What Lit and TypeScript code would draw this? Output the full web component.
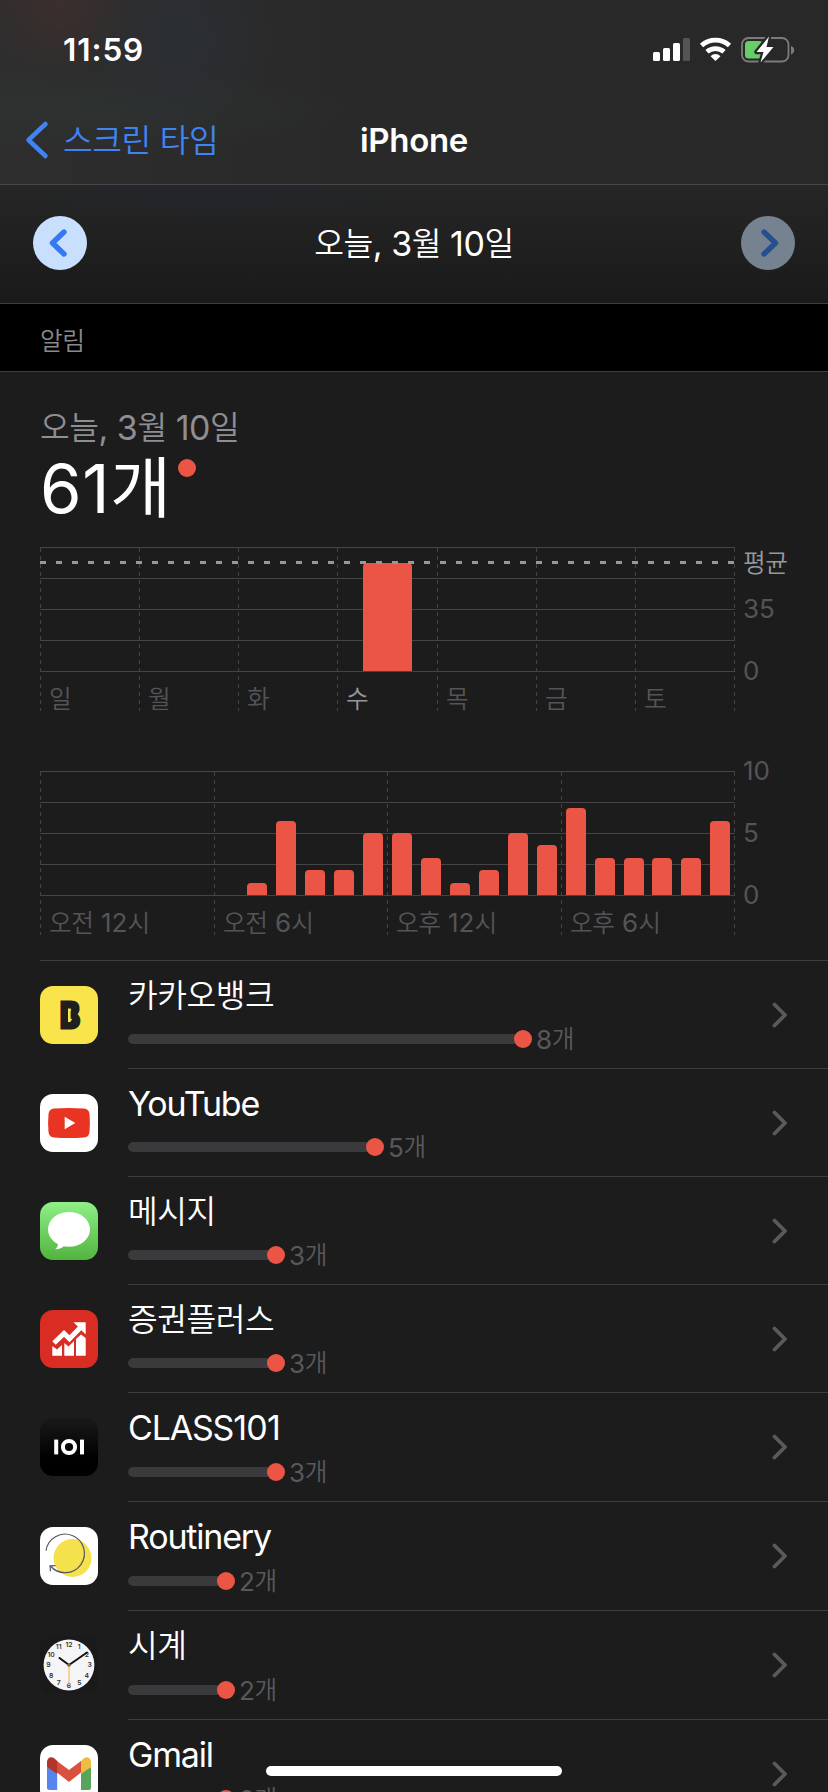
import { LitElement, html, svg, css } from 'lit';
import { customElement, property } from 'lit/decorators.js';

const RUNS = /([\uac00-\ud7a3]+|[\d,\s]+)/;

const runClass = (part: string) => {
	if (/[\uac00-\ud7a3]/.test(part)) return 'ko';
	return /[a-z]/i.test(part) ? 'la' : 'num';
};

// Hangul, latin and digit runs are spaced differently, so each run gets its own span
const mixed = (text: string) =>
	text
		.split(RUNS)
		.filter((part) => part)
		.map((part) => html`<span class=${runClass(part)}>${part}</span>`);

const mixedSvg = (text: string) =>
	text
		.split(RUNS)
		.filter((part) => part)
		.map((part) => svg`<tspan class=${runClass(part)}>${part}</tspan>`);

const CLOCK_NUMBERS = [1, 2, 3, 4, 5, 6, 7, 8, 9, 10, 11, 12];

const ICONS: Record<string, unknown> = {
	kakao: svg`
		<rect width="58" height="58" rx="13" fill="#fae44c" />
		<text x="20.2" y="42.2" font-family="Inter" font-weight="900" font-size="36" textLength="19.5" lengthAdjust="spacingAndGlyphs" fill="#1f1f1d" stroke="#1f1f1d" stroke-width="3">B</text>
		<rect x="28" y="22.5" width="2.6" height="13.5" fill="#fae44c" />`,
	youtube: svg`
		<rect width="58" height="58" rx="13" fill="#fff" />
		<path d="M14 14.5Q29 13.3 44 14.5Q49 15 49.5 20Q50.3 29 49.5 38Q49 43 44 43.5Q29 44.7 14 43.5Q9 43 8.5 38Q7.7 29 8.5 20Q9 15 14 14.5Z" fill="#e93323" />
		<path d="M24.7 22.7L35.3 29L24.7 35.2Z" fill="#fff" />`,
	messages: svg`
		<defs>
			<linearGradient id="green" x1="0" y1="0" x2="0" y2="1">
				<stop offset="0" stop-color="#8ef087" />
				<stop offset="1" stop-color="#52b33f" />
			</linearGradient>
		</defs>
		<rect width="58" height="58" rx="13" fill="url(#green)" />
		<ellipse cx="29" cy="27.4" rx="21" ry="17.4" fill="#fff" />
		<path d="M18 40Q18.5 45 15 47.3Q21 47.5 25 43Z" fill="#fff" />`,
	stocks: svg`
		<rect width="58" height="58" rx="13" fill="#d92d23" />
		<path d="M14 33L24 23.5L29.5 28.8L41 17" fill="none" stroke="#fff" stroke-width="5" />
		<path d="M33.5 12.3H45.7V24.5Z" fill="#fff" />
		<path d="M12.3 36L17 39.5L22 35V45.7H12.3ZM24.3 33L28.5 36.5L34 31V45.7H24.3ZM36 29L41 24.5L45.7 28V45.7H36Z" fill="#fff" />`,
	class101: svg`
		<defs>
			<linearGradient id="black" x1="0" y1="0" x2="0" y2="1">
				<stop offset="0" stop-color="#191919" />
				<stop offset="0.7" stop-color="#000" />
			</linearGradient>
		</defs>
		<rect width="58" height="58" rx="13" fill="url(#black)" />
		<rect x="14.2" y="21.6" width="4" height="14.8" fill="#fff" />
		<circle cx="29" cy="29" r="6.1" fill="none" stroke="#fff" stroke-width="4" />
		<rect x="40" y="21.6" width="4" height="14.8" fill="#fff" />`,
	routinery: svg`
		<rect width="58" height="58" rx="13" fill="#fff" />
		<circle cx="32.5" cy="31" r="19" fill="#f4e14b" />
		<path d="M6 23.7A19.3 19.3 0 1 1 10.5 39M10.5 44.3L10 38.8L15.5 38.6" fill="none" stroke="#55556a" stroke-width="1.2" />`,
	clock: svg`
		<rect width="58" height="58" rx="13" fill="#1a1a1a" />
		<circle cx="29" cy="29" r="25.4" fill="#f5f5f7" />
		${CLOCK_NUMBERS.map((n) => {
			const angle = (n * Math.PI) / 6;
			return svg`<text x=${29 + 20.6 * Math.sin(angle)} y=${31.3 - 20.6 * Math.cos(angle)} text-anchor="middle" font-family="Inter" font-weight="600" font-size="6.8" fill="#333">${n}</text>`;
		})}
		<path d="M29 29L19.5 22M29 29L47 16.5" stroke="#111" stroke-width="2" stroke-linecap="round" />
		<path d="M29 29V49" stroke="#f2bb6a" stroke-width="1.2" />
		<circle cx="29" cy="29" r="1.8" fill="#8a6330" />`,
	gmail: svg`
		<rect width="58" height="58" rx="13" fill="#fff" />
		<path d="M7 22L17.2 27V45H9.5Q7 45 7 42.5Z" fill="#5686ec" />
		<path d="M51 22L41 27V45H48.5Q51 45 51 42.5Z" fill="#57a55a" />
		<path d="M17 16L29 25L41 16V27.5L29 37L17 27.5Z" fill="#d9503f" />
		<path d="M17.2 16L14.5 13.5C11 10.5 7 13 7 17V22L17.2 29Z" fill="#b3342b" />
		<path d="M41 16L43.5 13.5C47 10.5 51 13 51 17V22L41 29Z" fill="#ecbd41" />`,
};

const shared = css`
	.la,
	.num {
		font-family: Inter, sans-serif;
		font-weight: 400;
	}

	.la {
		letter-spacing: -0.035em;
	}

	.num {
		letter-spacing: -0.014em;
	}

	.ko {
		font-family: 'Noto Sans CJK KR', sans-serif;
		font-weight: 350;
		font-size: 0.95em;
		letter-spacing: -0.015em;
		line-height: 1;
		vertical-align: 0.04em;
	}
`;

@customElement('st-app-row')
export class StAppRow extends LitElement {
	@property() name = '';
	@property() icon = '';
	@property({ type: Number }) count = 0;
	@property({ type: Number }) track = 0;

	static styles = [
		shared,
		css`
			:host {
				display: flex;
				font-family: Inter, sans-serif;
			}

			.icon {
				width: 58px;
				height: 58px;
				flex: none;
				margin: 26px 30px 0 40px;
			}

			.body {
				flex: 1;
				display: flex;
				justify-content: space-between;
				border-top: 1px solid var(--row-line, #3d3d3f);
			}

			.info {
				display: flex;
				flex-direction: column;
				padding-top: 14px;
			}

			.name {
				height: 39px;
				line-height: 41px;
				font-size: 34px;
				color: #fff;
				white-space: nowrap;
			}

			.name .num {
				letter-spacing: -0.02em;
			}

			.meter {
				display: flex;
				align-items: center;
				height: 18px;
				margin-top: var(--meter-gap, 16px);
			}

			.track {
				height: 10px;
				border-radius: 5px 0 0 5px;
				background: #3a3a3c;
			}

			.dot {
				width: 18px;
				height: 18px;
				margin-left: -2px;
				border-radius: 50%;
				background: #eb5545;
			}

			.count {
				margin: 0 0 2px 4px;
				height: 26px;
				line-height: 26px;
				font-size: 26px;
				color: #58585b;
				white-space: nowrap;
			}

			.chevron {
				width: 16px;
				height: 26px;
				margin: 41px 41px 0 0;
			}
		`,
	];

	render() {
		return html`
			<svg class="icon" viewBox="0 0 58 58">${ICONS[this.icon]}</svg>
			<div class="body">
				<div class="info">
					<div class="name">${mixed(this.name)}</div>
					<div class="meter">
						<div class="track" style="width: ${this.track + 2}px"></div>
						<div class="dot"></div>
						<div class="count">${mixed(`${this.count}개`)}</div>
					</div>
				</div>
				<svg class="chevron" viewBox="0 0 16 26">
					<path d="M3.5 2.5L14 13L3.5 23.5" fill="none" stroke="#5a5a5e" stroke-width="3.8" stroke-linecap="round" stroke-linejoin="round" />
				</svg>
			</div>
		`;
	}
}

interface Bar {
	x: number;
	width: number;
	height: number;
}

@customElement('st-chart')
export class StChart extends LitElement {
	@property({ attribute: false }) columns: { x: number; label: string; active?: boolean }[] = [];
	@property({ attribute: false }) bars: Bar[] = [];
	@property({ attribute: false }) scale: { y: number; label: string }[] = [];
	@property({ type: Number }) average = 0;

	static styles = [
		shared,
		css`
			:host {
				display: block;
			}

			svg {
				display: block;
				overflow: visible;
			}

			text {
				font-size: 26px;
				fill: #545457;
			}

			.num {
				letter-spacing: 0;
			}

			.strong {
				fill: #98989c;
			}

			.grid {
				stroke: #444446;
				stroke-width: 1;
				fill: none;
			}

			.dashed {
				stroke-dasharray: 4 4;
			}

			.average {
				stroke: #98989a;
				stroke-width: 3;
				stroke-dasharray: 6 10;
			}

			.bar {
				fill: #eb5545;
			}
		`,
	];

	render() {
		return html`
			<svg width="788" height="165" viewBox="0 0 788 165">
				${[0, 31, 62, 93, 124].map((y) => svg`<path class="grid" d="M0 ${y + 0.5}H695" />`)}
				${[...this.columns.map((c) => c.x), 694].map((x) => svg`<path class="grid dashed" d="M${x + 0.5} 1V164" />`)}
				${this.bars.map(
					({ x, width, height }) => svg`
						<path class="bar" d="M${x} 124V${128 - height}q0 -4 4 -4H${x + width - 4}q4 0 4 4V124Z" />`
				)}
				${this.average ? svg`<path class="average" d="M0 ${this.average}H694" />` : ''}
				${this.columns.map(
					(c) => svg`<text class=${c.active ? 'strong' : ''} x=${c.x + 9} y="161">${mixedSvg(c.label)}</text>`
				)}
				${this.scale.map((s) => svg`<text x="703" y=${s.y + 9}>${mixedSvg(s.label)}</text>`)}
				${this.average ? svg`<text class="strong" x="703" y=${this.average + 9}>${mixedSvg('평균')}</text>` : ''}
			</svg>
		`;
	}
}

const DAYS = ['일', '월', '화', '수', '목', '금', '토'].map((label, i) => ({
	label,
	x: [0, 99, 198, 297, 397, 496, 595][i],
	active: i === 3,
}));

const HOURS = ['오전 12시', '오전 6시', '오후 12시', '오후 6시'].map((label, i) => ({
	label,
	x: [0, 174, 347, 521][i],
}));

const HOURLY = [0, 0, 0, 0, 0, 0, 0, 1, 6, 2, 2, 5, 5, 3, 1, 2, 5, 4, 7, 3, 3, 3, 3, 6];

const HOURLY_BARS: Bar[] = HOURLY.map((value, hour) => ({
	x: Math.round(hour * 28.96 + 4.3),
	width: 20,
	height: Math.round(value * 12.4),
})).filter((bar) => bar.height > 0);

const APPS = [
	{ name: '카카오뱅크', icon: 'kakao', count: 8, track: 386 },
	{ name: 'YouTube', icon: 'youtube', count: 5, track: 238 },
	{ name: '메시지', icon: 'messages', count: 3, track: 139 },
	{ name: '증권플러스', icon: 'stocks', count: 3, track: 139 },
	{ name: 'CLASS101', icon: 'class101', count: 3, track: 139 },
	{ name: 'Routinery', icon: 'routinery', count: 2, track: 89 },
	{ name: '시계', icon: 'clock', count: 2, track: 89 },
	{ name: 'Gmail', icon: 'gmail', count: 2, track: 89 },
];

@customElement('app-root')
export class AppRoot extends LitElement {
	static styles = [
		shared,
		css`
			:host {
				display: block;
				position: relative;
				width: 828px;
				height: 1792px;
				overflow: hidden;
				background: #1c1c1c;
				color: #fff;
				font-family: Inter, sans-serif;
			}

			.header {
				height: 184px;
				border-bottom: 1px solid #464646;
				background:
					radial-gradient(circle at 60px 0, #3c2f2e 0, transparent 80px),
					radial-gradient(circle at 180px 40px, #2b2f34 0, transparent 100px),
					radial-gradient(ellipse at 70px 110px, #2d3230 0, transparent 280px),
					linear-gradient(90deg, #2e2e2e, #292929 40%, #282828);
			}

			.status {
				display: flex;
				justify-content: space-between;
				height: 98px;
				padding: 0 32px 0 63px;
			}

			.time {
				padding-top: 30px;
				line-height: 40px;
				font-size: 31.5px;
				font-weight: 600;
				letter-spacing: 0.9px;
			}

			.indicators {
				width: 144px;
				height: 98px;
			}

			.nav {
				display: grid;
				grid-template-columns: 1fr auto 1fr;
				align-items: center;
				height: 84px;
			}

			.back {
				display: flex;
				align-items: center;
				gap: 14px;
				padding-left: 25px;
				color: #4083f2;
				font-size: 34px;
				line-height: 41px;
			}

			.back svg {
				width: 24px;
				height: 40px;
			}

			.title {
				font-size: 33px;
				font-weight: 600;
				letter-spacing: -0.3px;
			}

			.pager {
				display: flex;
				align-items: center;
				justify-content: space-between;
				height: 118px;
				padding: 0 33px;
				border-bottom: 1px solid #3d3d3f;
				background:
					radial-gradient(ellipse at 210px 0, rgba(33, 38, 48, 0.6) 0, transparent 200px),
					linear-gradient(#262626, #1a1a1a);
			}

			.pager svg {
				width: 54px;
				height: 54px;
				margin-bottom: 2px;
			}

			.date {
				font-size: 34px;
				line-height: 40px;
				margin-bottom: 1px;
			}

			.section {
				height: 67px;
				padding-left: 40px;
				background: #000;
				border-bottom: 1px solid #3d3d3f;
				line-height: 76px;
				font-size: 26px;
				color: #8a8a8c;
			}

			.summary {
				padding: 35px 0 0 40px;
				height: 140px;
			}

			.summary-date {
				line-height: 41px;
				font-size: 34px;
				color: #8e8e93;
			}

			.total {
				display: flex;
				align-items: flex-start;
				height: 84px;
				line-height: 82px;
				font-size: 67px;
			}

			.total .num {
				letter-spacing: 0.01em;
			}

			.total .ko {
				font-size: 66px;
				font-weight: 400;
				vertical-align: 0.01em;
			}

			.total-dot {
				width: 18px;
				height: 18px;
				margin: 11px 0 0 8px;
				border-radius: 50%;
				background: #eb5545;
			}

			.chart {
				margin-left: 40px;
			}

			.weekly {
				padding-bottom: 59px;
			}

			.list {
				margin-top: 24px;
			}

			.row {
				height: 108px;
			}

			.row:nth-child(n + 5) {
				height: 109px;
				--meter-gap: 17px;
			}

			.row:first-child {
				--row-line: transparent;
				background: linear-gradient(#3d3d3f, #3d3d3f) 40px 0 / 100% 1px no-repeat;
			}

			.home {
				position: absolute;
				left: 266px;
				bottom: 16px;
				width: 296px;
				height: 10px;
				border-radius: 5px;
				background: #fff;
			}
		`,
	];

	renderIndicators() {
		return html`
			<svg class="indicators" viewBox="652 0 144 98">
				<g fill="#fff">
					<rect x="653" y="52" width="7" height="9" rx="1.5" />
					<rect x="663" y="48" width="7" height="13" rx="1.5" />
					<rect x="673" y="43" width="7" height="18" rx="1.5" />
					<rect x="683" y="38" width="7" height="23" rx="1.5" fill="#555" />
				</g>
				<g fill="none" stroke="#fff" stroke-width="4.8">
					<path d="M701.5 45.5A21 21 0 0 1 729.5 45.5" />
					<path d="M707 51.8A13 13 0 0 1 724 51.8" />
				</g>
				<path d="M715.5 61L710.5 56.2A7 7 0 0 1 720.5 56.2Z" fill="#fff" />
				<rect x="742" y="38" width="46.5" height="23.5" rx="6.5" fill="none" stroke="#7c7c7e" stroke-width="1.8" />
				<path d="M791 46Q794.2 47 794.2 50T791 54.5Z" fill="#7c7c7e" />
				<rect x="745" y="41" width="18" height="17.5" rx="3.5" fill="#67cd67" />
				<path d="M769 36.5L756.5 52H763.5L760.5 62.5L773.5 47H766.5Z" fill="#fff" stroke="#282828" stroke-width="4.5" stroke-linejoin="round" />
				<path d="M769 36.5L756.5 52H763.5L760.5 62.5L773.5 47H766.5Z" fill="#fff" />
			</svg>
		`;
	}

	render() {
		return html`
			<div class="header">
				<div class="status">
					<div class="time">11:59</div>
					${this.renderIndicators()}
				</div>
				<div class="nav">
					<div class="back">
						<svg viewBox="0 0 24 40">
							<path d="M20.5 4L3.5 20L20.5 36" fill="none" stroke="#4083f2" stroke-width="4.5" stroke-linecap="round" stroke-linejoin="round" />
						</svg>
						<div>${mixed('스크린 타임')}</div>
					</div>
					<div class="title">iPhone</div>
				</div>
			</div>
			<div class="pager">
				<svg viewBox="0 0 54 54">
					<circle cx="27" cy="27" r="27" fill="#c8dffd" />
					<path d="M31 16L19.5 27L31 38" fill="none" stroke="#3579f0" stroke-width="5.4" stroke-linecap="round" stroke-linejoin="round" />
				</svg>
				<div class="date">${mixed('오늘, 3월 10일')}</div>
				<svg viewBox="0 0 54 54">
					<circle cx="27" cy="27" r="27" fill="#768290" />
					<path d="M23 16L34.5 27L23 38" fill="none" stroke="#264f8f" stroke-width="5.4" stroke-linecap="round" stroke-linejoin="round" />
				</svg>
			</div>
			<div class="section">${mixed('알림')}</div>
			<div class="summary">
				<div class="summary-date">${mixed('오늘, 3월 10일')}</div>
				<div class="total">
					<div>${mixed('61개')}</div>
					<div class="total-dot"></div>
				</div>
			</div>
			<st-chart
				class="chart weekly"
				.columns=${DAYS}
				.bars=${[{ x: 323, width: 49, height: 108 }]}
				.scale=${[{ y: 62, label: '35' }, { y: 124, label: '0' }]}
				average="15.5"
			></st-chart>
			<st-chart
				class="chart"
				.columns=${HOURS}
				.bars=${HOURLY_BARS}
				.scale=${[{ y: 0, label: '10' }, { y: 62, label: '5' }, { y: 124, label: '0' }]}
			></st-chart>
			<div class="list">
				${APPS.map(
					(app) => html`<st-app-row class="row" name=${app.name} icon=${app.icon} count=${app.count} track=${app.track}></st-app-row>`
				)}
			</div>
			<div class="home"></div>
		`;
	}
}
